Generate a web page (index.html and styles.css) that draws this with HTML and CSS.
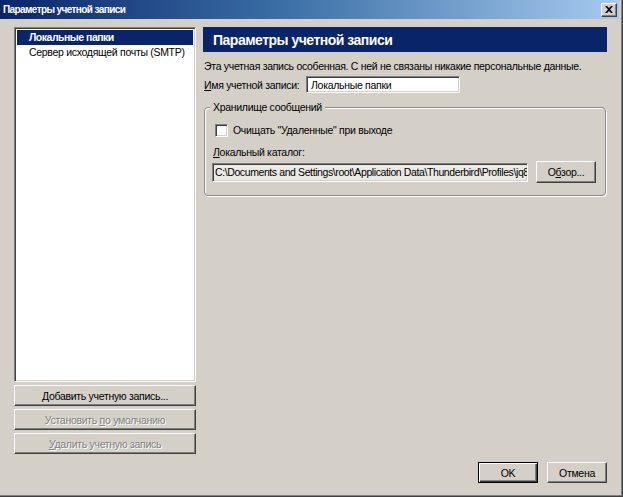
FILE: index.html
```html
<!DOCTYPE html>
<html>
<head>
<meta charset="utf-8">
<link rel="stylesheet" href="styles.css">
</head>
<body>
<div class="win">
  <div class="titlebar">
    <span class="title">Параметры учетной записи</span>
    <span class="close">
      <svg width="8" height="7" viewBox="0 0 8 7"><path d="M0 0h2l2 2 2-2h2L5 3.5 8 7H6L4 5 2 7H0l3-3.5z" fill="#000"/></svg>
    </span>
  </div>
  <div class="content">
    <div class="main">
      <div class="left">
        <div class="list">
          <div class="item sel">Локальные папки</div>
          <div class="item">Сервер исходящей почты (SMTP)</div>
        </div>
        <div class="btn wide"><span><span class="u">Д</span>обавить учетную запись...</span></div>
        <div class="btn wide dis"><span>Установить <span class="u">п</span>о умолчанию</span></div>
        <div class="btn wide dis"><span><span class="u">У</span>далить учетную запись</span></div>
      </div>
      <div class="right">
        <div class="header">Параметры учетной записи</div>
        <div class="info">Эта учетная запись особенная. С ней не связаны никакие персональные данные.</div>
        <div class="namerow">
          <span class="lbl"><span class="u">И</span>мя учетной записи:</span>
          <div class="field name">Локальные папки</div>
        </div>
        <div class="group">
          <div class="legend">Хранилище сообщений</div>
          <div class="chkrow">
            <span class="chk"></span>
            <span>Очищать "Удаленные" при выходе</span>
          </div>
          <div class="dirlbl"><span class="u">Л</span>окальный каталог:</div>
          <div class="dirrow">
            <div class="field path"><span class="pathtext">C:\Documents and Settings\root\Application Data\Thunderbird\Profiles\jq8swk0p.default\Mail\Local Folders</span></div>
            <div class="btn browse"><span>О<span class="u">б</span>зор...</span></div>
          </div>
        </div>
      </div>
    </div>
    <div class="footer">
      <div class="btn ok"><span>OK</span></div>
      <div class="btn cancel"><span>Отмена</span></div>
    </div>
  </div>
</div>
</body>
</html>
```
FILE: styles.css
```css
html, body {
  margin: 0;
  padding: 0;
  background: #d4d0c8;
}
body {
  width: 623px;
  height: 497px;
  overflow: hidden;
  font-family: "Liberation Sans", Arial, sans-serif;
  font-size: 10.5px;
  letter-spacing: -0.3px;
  color: #000;
}
.win {
  width: 623px;
  height: 497px;
  box-sizing: border-box;
  border-right: 1px solid #404040;
  border-bottom: 1px solid #404040;
  box-shadow: inset -1px -1px 0 #808080;
  background: #d4d0c8;
  display: flex;
  flex-direction: column;
  padding: 0 3px 2px 0;
}
.titlebar {
  height: 19px;
  background: linear-gradient(to right, #0a246a 0%, #3a6ea5 45%, #a6caf0 100%);
  display: flex;
  align-items: center;
  justify-content: space-between;
  padding: 0 2px 0 3px;
}
.title {
  color: #fff;
  font-weight: bold;
  font-size: 10px;
  letter-spacing: -0.6px;
}
.close {
  width: 14px;
  height: 12px;
  background: #d4d0c8;
  border: 1px solid;
  border-color: #fff #404040 #404040 #fff;
  box-shadow: inset -1px -1px 0 #808080;
  display: flex;
  align-items: center;
  justify-content: center;
}
.content {
  flex: 1;
  display: flex;
  flex-direction: column;
  padding: 8px 12px 0 14px;
}
.main {
  display: flex;
  gap: 7px;
  height: 427px;
}
.left {
  width: 182px;
  flex-shrink: 0;
  display: flex;
  flex-direction: column;
  gap: 3px;
}
.list {
  flex: 1;
  background: #fff;
  border: 1px solid;
  border-color: #808080 #fff #fff #808080;
  box-shadow: inset 1px 1px 0 #404040, inset -1px -1px 0 #d4d0c8;
  padding: 2px;
}
.item {
  height: 15px;
  line-height: 15px;
  padding-left: 12px;
  white-space: nowrap;
}
.item.sel {
  background: #0a246a;
  color: #fff;
  font-weight: bold;
  letter-spacing: -0.5px;
}
.btn {
  box-sizing: border-box;
  background: #d4d0c8;
  border: 1px solid;
  border-color: #fff #404040 #404040 #fff;
  box-shadow: inset -1px -1px 0 #808080;
  display: flex;
  align-items: center;
  justify-content: center;
  white-space: nowrap;
  flex-shrink: 0;
}
.btn.wide {
  height: 21px;
}
.btn.dis {
  color: #808080;
  text-shadow: 1px 1px 0 #fff;
}
.u {
  text-decoration: underline;
}
.right {
  flex: 1;
  min-width: 0;
  display: flex;
  flex-direction: column;
}
.header {
  height: 25px;
  flex-shrink: 0;
  background: #0a246a;
  color: #fff;
  font-weight: bold;
  font-size: 14px;
  letter-spacing: -0.5px;
  display: flex;
  align-items: center;
  padding-left: 10px;
}
.info {
  margin-top: 7px;
  padding-left: 1px;
  line-height: 14px;
  white-space: nowrap;
}
.namerow {
  display: flex;
  align-items: center;
  margin-top: 3px;
  padding-left: 1px;
}
.lbl {
  width: 102px;
  flex-shrink: 0;
  white-space: nowrap;
}
.field {
  box-sizing: border-box;
  background: #fff;
  border: 1px solid;
  border-color: #808080 #fff #fff #808080;
  box-shadow: inset 1px 1px 0 #404040, inset -1px -1px 0 #d4d0c8;
  padding: 0 4px;
  white-space: nowrap;
  overflow: hidden;
  display: flex;
  align-items: center;
}
.field.name {
  width: 154px;
  height: 17px;
}
.group {
  margin-top: 14px;
  height: 89px;
  box-sizing: border-box;
  border: 1px solid #8e8b84;
  border-radius: 4px;
  box-shadow: 1px 1px 0 #fff, inset 1px 1px 0 #fff;
  margin-left: 1px;
  margin-right: 1px;
  padding: 0 9px 0 7px;
  position: relative;
}
.legend {
  position: absolute;
  top: -8px;
  left: 5px;
  background: #d4d0c8;
  padding: 0 3px;
  line-height: 14px;
}
.chkrow {
  display: flex;
  align-items: center;
  gap: 5px;
  margin-top: 16px;
  padding-left: 3px;
  line-height: 13px;
}
.chk {
  width: 13px;
  height: 13px;
  box-sizing: border-box;
  background: #fff;
  border: 1px solid;
  border-color: #808080 #fff #fff #808080;
  box-shadow: inset 1px 1px 0 #404040, inset -1px -1px 0 #d4d0c8;
}
.dirlbl {
  margin-top: 8px;
  line-height: 14px;
  padding-left: 1px;
}
.dirrow {
  display: flex;
  align-items: center;
  gap: 8px;
  margin-top: 2px;
}
.field.path {
  flex: 1;
  min-width: 0;
  height: 19px;
  background: #ebe9e4;
  font-size: 10.5px;
  letter-spacing: -0.4px;
  padding: 0 2px;
  text-overflow: clip;
}
.pathtext {
  white-space: nowrap;
}
.btn.browse {
  width: 60px;
  height: 22px;
}
.footer {
  display: flex;
  justify-content: flex-end;
  gap: 9px;
  margin-top: 8px;
}
.btn.ok, .btn.cancel {
  width: 60px;
  height: 21px;
}
.btn.ok {
  border: 1px solid #000;
  box-shadow: inset 1px 1px 0 #fff, inset -1px -1px 0 #404040, inset -2px -2px 0 #808080;
}
```
